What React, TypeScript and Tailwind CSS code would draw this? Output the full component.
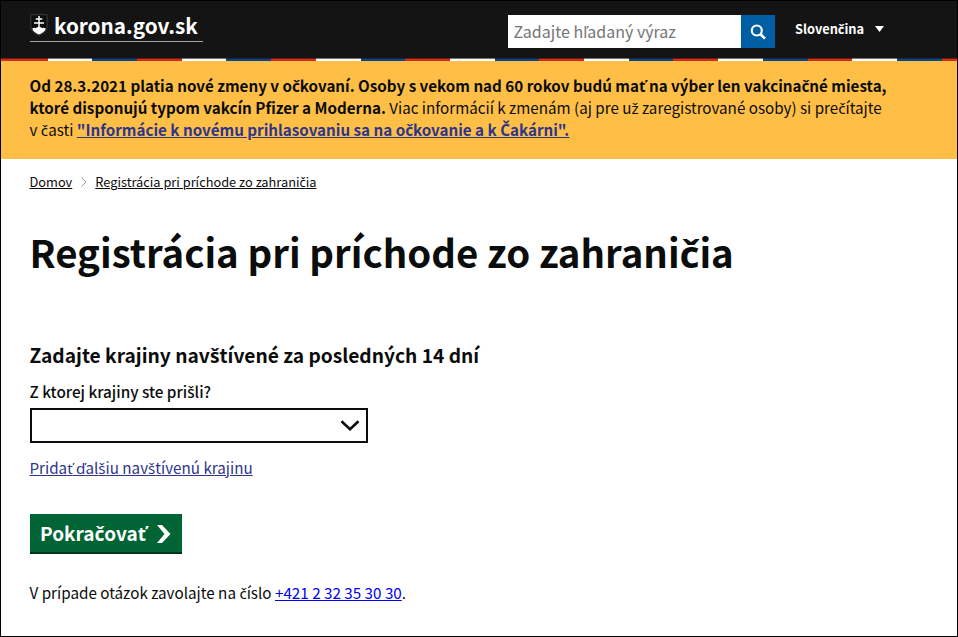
import React from "react";

function T({ children }: { children: string }) {
  return (
    <>
      {children.split(/([čšžľťďČ])/).map((part, i) =>
        i % 2 ? (
          <span key={i} className="font-['Noto_Sans',sans-serif] leading-none">{part}</span>
        ) : (
          part
        )
      )}
    </>
  );
}

function Crest() {
  return (
    <svg width="18" height="22" viewBox="0 0 18 22" className="block">
      <path d="M.9.7h16.200v11.500c0 4.500-3.600 7.600-8.100 9.100-4.500-1.500-8.100-4.600-8.100-9.100z" fill="#0b0c0c" stroke="#3c3d3e" strokeWidth="1" />
      <path d="M9 2v13M5.700 5h6.600M4 9h10" stroke="#fff" strokeWidth="1.500" />
      <path d="M2.200 14.800c1-1.300 2.600-1.500 3.600-.5 1-1.700 5.400-1.700 6.400 0 1-1 2.600-.8 3.600.5-1 2.700-3.700 4.700-6.800 5.700-3.100-1-5.800-3-6.800-5.700z" fill="#fff" />
    </svg>
  );
}

function Header() {
  return (
    <header className="flex h-[57px] items-start bg-[#141414] pl-[28.500px] text-white">
      <a className="mt-[11px] flex h-[29.500px] w-[173px] border-b border-[#a5a5a5]">
        <span className="mt-[2px]"><Crest /></span>
        <span className="ml-[6.500px] text-[20.700px] leading-[26px] font-bold">korona.gov.sk</span>
      </a>
      <form className="mt-[14px] ml-[305.500px] flex h-[33px] w-[267px]">
        <div className="w-[233px] bg-white pl-[5.500px] text-[16px] leading-[33px] text-[#757575]"><T>Zadajte hľadaný výraz</T></div>
        <div className="flex flex-1 items-center justify-center bg-[#005ea5]">
          <svg width="16" height="16" viewBox="0 0 16 16" fill="none" stroke="#fff">
            <circle cx="6.800" cy="6.500" r="5" strokeWidth="2.200" />
            <path d="M10.300 10l4.700 4.700" strokeWidth="2.600" />
          </svg>
        </div>
      </form>
      <div className="mt-[17px] ml-[20px] flex items-center text-[12.800px] leading-[22px] font-bold">
        <span className="w-[80px]"><T>Slovenčina</T></span>
        <svg width="9" height="6" viewBox="0 0 9 6"><path d="M0 0h9L4.500 6z" fill="#fff" /></svg>
      </div>
    </header>
  );
}

export default function App() {
  return (
    <div className="h-[637px] w-[958px] overflow-hidden border border-black bg-white font-['Noto_Sans_CJK_SC','Noto_Sans',sans-serif] whitespace-nowrap text-[#0b0c0c]">
      <Header />
      <div className="h-[3px] bg-[repeating-linear-gradient(90deg,#dc2a1a_0px,#dc2a1a_44.700px,#ffffff_44.700px,#ffffff_89.400px,#0e4489_89.400px,#0e4489_134.100px)] bg-[position:2px_0] shadow-[inset_0_1px_0_rgba(20,20,20,0.6)]" />
      <section className="h-[97.500px] bg-[#ffbf47] px-[28.500px] pt-[13px] text-[15.200px] leading-[22px]">
        <p className="font-bold"><T>Od 28.3.2021 platia nové zmeny v očkovaní. Osoby s vekom nad 60 rokov budú mať na výber len vakcinačné miesta,</T></p>
        <p><b>ktoré disponujú typom vakcín Pfizer a Moderna.</b> <T>Viac informácií k zmenám (aj pre už zaregistrované osoby) si prečítajte</T></p>
        <p><T>v časti </T><a className="font-bold text-[#2e358b] underline"><T>"Informácie k novému prihlasovaniu sa na očkovanie a k Čakárni".</T></a></p>
      </section>
      <nav className="flex h-[46px] items-center pl-[28.500px] text-[12.800px]">
        <a className="underline">Domov</a>
        <svg className="mx-[8.500px]" width="6" height="10" viewBox="0 0 6 10" fill="none" stroke="#999"><path d="M.5.5L5 5 .5 9.500" /></svg>
        <a className="underline"><T>Registrácia pri príchode zo zahraničia</T></a>
      </nav>
      <main className="px-[28.500px]">
        <h1 className="mt-[16px] text-[38.400px] leading-[60px] font-bold"><T>Registrácia pri príchode zo zahraničia</T></h1>
        <h2 className="mt-[60px] text-[19.200px] leading-[28px] font-bold"><T>Zadajte krajiny navštívené za posledných 14 dní</T></h2>
        <label className="mt-[11px] block text-[15.300px] leading-[22px] font-medium"><T>Z ktorej krajiny ste prišli?</T></label>
        <div className="mt-[6px] flex h-[35px] w-[338.500px] items-center justify-end border-2 border-[#0b0c0c] pr-[6px]">
          <svg width="20" height="12" viewBox="0 0 20 12" fill="none" stroke="#0b0c0c" strokeWidth="2.600"><path d="M1.500 2.200L10 10.200l8.500-8" /></svg>
        </div>
        <a className="mt-[13px] block text-[15.200px] leading-[22px] text-[#2e358b] underline"><T>Pridať ďalšiu navštívenú krajinu</T></a>
        <button className="mt-[36px] flex h-[40px] w-[152.500px] items-center bg-[#006435] pl-[10.500px] text-[19px] font-bold text-white shadow-[inset_0_-2px_0_#003618]">
          <span className="w-[117px] text-left"><T>Pokračovať</T></span>
          <svg width="14" height="18" viewBox="0 0 14 18"><path d="M0 0h5l8.500 9L5 18H0l7.500-9z" fill="#fff" /></svg>
        </button>
        <p className="mt-[27px] text-[15.230px] leading-[22px]"><T>V prípade otázok zavolajte na číslo </T><a className="text-[#0000ee] underline">+421 2 32 35 30 30</a>.</p>
      </main>
    </div>
  );
}
